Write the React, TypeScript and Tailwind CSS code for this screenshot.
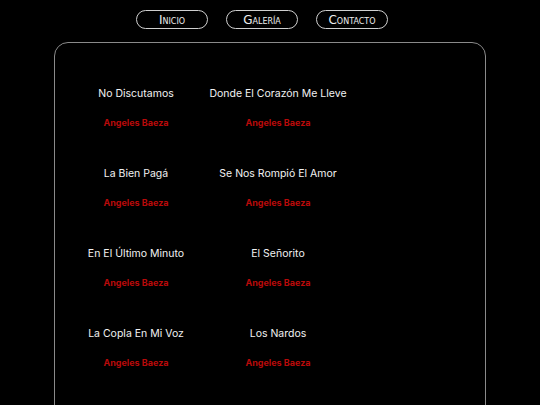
const songs = [
  'No Discutamos',
  'Donde El Corazón Me Lleve',
  'La Bien Pagá',
  'Se Nos Rompió El Amor',
  'En El Último Minuto',
  'El Señorito',
  'La Copla En Mi Voz',
  'Los Nardos',
];

const navItems = ['Inicio', 'Galería', 'Contacto'];

const SongCard = ({ title }: { title: string }) => (
  <div className="flex flex-col items-center">
    <div className="text-[10.5px] leading-[14px] text-[#f2f2f2] whitespace-nowrap">{title}</div>
    <div className="mt-[16px] text-[9px] leading-[12px] font-bold text-[#b80a0a] whitespace-nowrap">
      Angeles Baeza
    </div>
  </div>
);

export default function App() {
  return (
    <div className="min-h-[405px] h-[405px] overflow-hidden bg-black font-['Inter','Open_Sans',sans-serif]">
      {/* Navigation */}
      <nav className="flex justify-center gap-[18px] pt-[10px] pr-[16px]">
        {navItems.map((item) => (
          <a
            key={item}
            href="#"
            className="flex h-[19px] w-[72px] items-center justify-center rounded-full border border-[#cfcfcf] text-[12px] leading-none text-[#eeeeee] [font-variant:small-caps] font-['DejaVu_Sans',sans-serif]"
          >
            {item}
          </a>
        ))}
      </nav>

      {/* Songs panel */}
      <main className="mx-[54px] mt-[13px] h-[420px] rounded-[14px] border border-[#8a8a8a] pt-[44px] pl-[10px]">
        <div className="grid grid-cols-[142px_142px] gap-y-[38px]">
          {songs.map((song) => (
            <SongCard key={song} title={song} />
          ))}
        </div>
      </main>
    </div>
  );
}
